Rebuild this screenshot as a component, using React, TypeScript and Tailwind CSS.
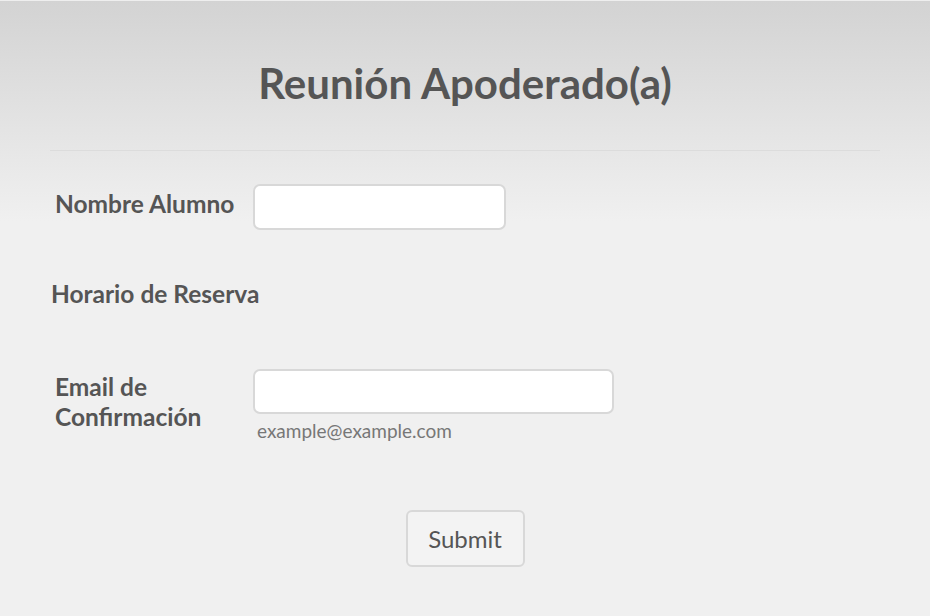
export default function App() {
  return (
    <div
      className="w-[930px] h-[616px] overflow-hidden border-t border-[#eeeeee] bg-[linear-gradient(to_bottom,#d3d3d3_0px,#f0f0f0_220px,#f0f0f0_100%)] text-[#555555]"
      style={{ fontFamily: "Lato, 'Open Sans', sans-serif" }}
    >
      <div className="mx-[50px] border-b border-[#dcdcdc] pt-[57px] pb-[42px] text-center">
        <h1 className="text-[42px] font-bold leading-[50px]">Reunión Apoderado(a)</h1>
      </div>

      <div className="flex items-start pt-[33px] pl-[55px]">
        <label className="mt-[5px] w-[198px] text-[24.5px] font-bold leading-[30px]">Nombre Alumno</label>
        <input className="w-[253px] h-[46px] rounded-[7px] border-2 border-[#d8d8d8] bg-white outline-none" />
      </div>

      <div className="pt-[49px] pl-[51px]">
        <label className="text-[24.5px] font-bold leading-[30px]">Horario de Reserva</label>
      </div>

      <div className="flex items-start pt-[60px] pl-[55px]">
        <label className="mt-[3px] w-[198px] text-[24.5px] font-bold leading-[30px]">
          Email de
          <br />
          Confirmación
        </label>
        <div className="flex flex-col">
          <input className="w-[361px] h-[45px] rounded-[7px] border-2 border-[#d8d8d8] bg-white outline-none" />
          <span className="pl-[4px] pt-[5px] text-[19px] leading-[24px] text-[#777777]">example@example.com</span>
        </div>
      </div>

      <div className="flex justify-center pt-[67px]">
        <button className="w-[119px] h-[57px] rounded-[6px] border-2 border-[#d8d8d8] bg-[#f3f3f3] text-[24px] text-[#555555]">
          Submit
        </button>
      </div>
    </div>
  );
}
